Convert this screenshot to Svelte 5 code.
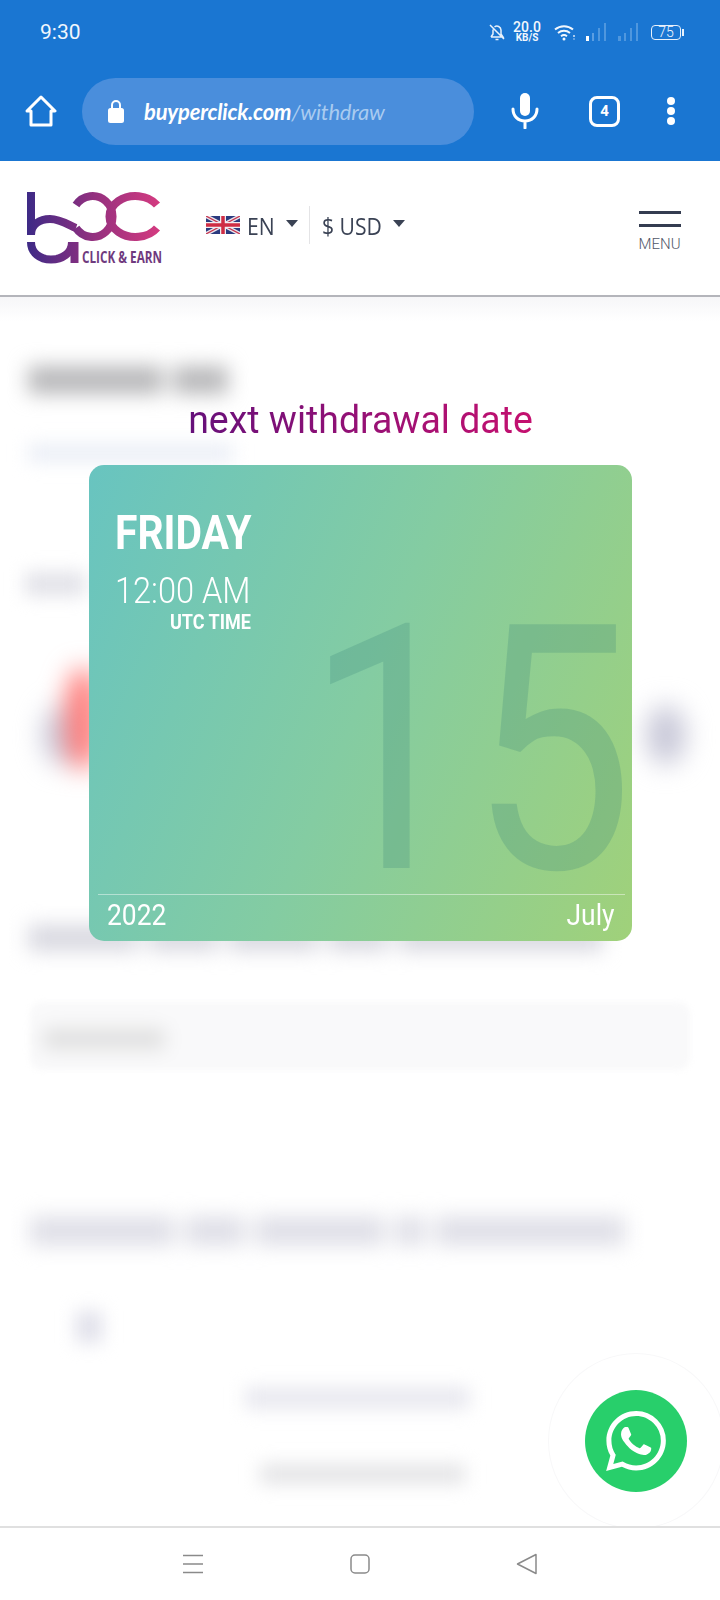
<script>
  const waPath = "M17.472 14.382c-.297-.149-1.758-.867-2.03-.967-.273-.099-.471-.148-.67.15-.197.297-.767.966-.94 1.164-.173.199-.347.223-.644.075-.297-.15-1.255-.463-2.39-1.475-.883-.788-1.48-1.761-1.653-2.059-.173-.297-.018-.458.13-.606.134-.133.298-.347.446-.52.149-.174.198-.298.298-.497.099-.198.05-.371-.025-.52-.075-.149-.669-1.612-.916-2.207-.242-.579-.487-.5-.669-.51-.173-.008-.371-.01-.57-.01-.198 0-.52.074-.792.372-.272.297-1.04 1.016-1.04 2.479 0 1.462 1.065 2.875 1.213 3.074.149.198 2.096 3.2 5.077 4.487.709.306 1.262.489 1.694.625.712.227 1.36.195 1.871.118.571-.085 1.758-.719 2.006-1.413.248-.694.248-1.289.173-1.413-.074-.124-.272-.198-.57-.347m-5.421 7.403h-.004a9.87 9.87 0 01-5.031-1.378l-.361-.214-3.741.982.998-3.648-.235-.374a9.86 9.86 0 01-1.51-5.26c.001-5.45 4.436-9.884 9.888-9.884 2.64 0 5.122 1.03 6.988 2.898a9.825 9.825 0 012.893 6.994c-.003 5.45-4.437 9.884-9.885 9.884m8.413-18.297A11.815 11.815 0 0012.05 0C5.495 0 .16 5.335.157 11.892c0 2.096.547 4.142 1.588 5.945L.057 24l6.305-1.654a11.882 11.882 0 005.683 1.448h.005c6.554 0 11.89-5.335 11.893-11.893a11.821 11.821 0 00-3.48-8.413z";
</script>

<div class="phone">
  <div class="chrome">
    <div class="status">
      <span class="clock">9:30</span>
      <div class="status-icons">
        <svg width="18" height="18" viewBox="0 0 18 18" fill="none" stroke="#e8f1fb" stroke-width="1.5">
          <path d="M3 14h12l-2-3V7a4 4 0 0 0-6.500-3M5 6.500V11l-2 3M2 2l14 14" />
          <path d="M7.500 16.500h3" />
        </svg>
        <div class="speed"><b>20.0</b><small>KB/S</small></div>
        <svg class="wifi" width="24" height="17" viewBox="0 0 24 17" fill="none" stroke="#f2f7fd" stroke-width="2">
          <path d="M1 5.500a14 14 0 0 1 18 0M4 9a9.500 9.500 0 0 1 12 0M7 12.200a5 5 0 0 1 6 0" />
          <circle cx="10" cy="15" r="1.500" fill="#f2f7fd" stroke="none" />
          <path d="M20 11v2M20 14.500v1" stroke="#d5e5f7" stroke-width="1.500" />
        </svg>
        <svg width="22" height="20" viewBox="0 0 22 20">
          <rect x="0" y="14" width="3" height="5" fill="#fff" />
          <rect x="6" y="11" width="2" height="8" fill="#5b9ee2" />
          <rect x="12" y="6" width="2" height="13" fill="#4f97de" />
          <rect x="18" y="1" width="2" height="18" fill="#4f97de" />
        </svg>
        <svg width="22" height="20" viewBox="0 0 22 20">
          <rect x="0" y="14" width="3" height="5" fill="#4f97de" />
          <rect x="6" y="11" width="2" height="8" fill="#4f97de" />
          <rect x="12" y="6" width="2" height="13" fill="#4f97de" />
          <rect x="18" y="1" width="2" height="18" fill="#4f97de" />
        </svg>
        <div class="battery"><span>75</span></div>
      </div>
    </div>

    <div class="toolbar">
      <svg class="home" width="32" height="32" viewBox="0 0 32 32" fill="none" stroke="#fff" stroke-width="3" stroke-linejoin="round">
        <path d="M2 16 16 2l14 14h-4v14H6V16z" />
      </svg>
      <div class="url">
        <svg width="18" height="24" viewBox="0 0 18 24">
          <path d="M5 10V6a4 4 0 0 1 8 0v4" fill="none" stroke="#fff" stroke-width="2" />
          <rect x="1" y="9" width="16" height="15" rx="2.500" fill="#fff" />
        </svg>
        <span class="url-text">buyperclick.com<em>/withdraw</em></span>
      </div>
      <svg class="mic" width="28" height="36" viewBox="0 0 28 36" fill="none" stroke="#fff" stroke-width="3" stroke-linecap="round">
        <rect x="9" y="0" width="10" height="23" rx="5" fill="#fff" stroke="none" />
        <path d="M2 16c0 7 5 12 12 12s12-5 12-12M14 28v7" />
      </svg>
      <div class="tabs">4</div>
      <div class="dots"><i></i><i></i><i></i></div>
    </div>
  </div>

  <header>
    <svg class="logo" width="140" height="80" viewBox="27 190 140 80" fill="none">
      <defs>
        <linearGradient id="logoGrad" gradientUnits="userSpaceOnUse" x1="27" y1="0" x2="162" y2="0">
          <stop offset="0" stop-color="#3d2a86" />
          <stop offset="0.5" stop-color="#94307f" />
          <stop offset="1" stop-color="#d63b80" />
        </linearGradient>
      </defs>
      <g stroke="url(#logoGrad)" stroke-width="8">
        <path d="M31 192v43" />
        <path d="M31 235c0-11 9-16 19-16 11 0 20 7 26 9" />
        <path d="M31 242c0 11 9 17.500 20 17.500s21-6 21-17.500" />
        <path d="M74.500 242v21" />
        <path d="M76 205A20 20.500 0 1 1 76 228" />
        <path d="M157 205A26 20.500 0 1 0 157 228" />
      </g>
      <text class="tagline" x="82" y="263" textLength="80" lengthAdjust="spacingAndGlyphs">CLICK &amp; EARN</text>
    </svg>

    <div class="pickers">
      <svg class="flag" width="34" height="18" viewBox="0 0 34 18">
        <rect width="34" height="18" fill="#2b3a7e" />
        <path d="M0 0l34 18M34 0 0 18" stroke="#e9e6ee" stroke-width="4" />
        <path d="M0 0l34 18M34 0 0 18" stroke="#c8364f" stroke-width="1.200" />
        <path d="M17 0v18M0 9h34" stroke="#f0edf2" stroke-width="6" />
        <path d="M17 0v18M0 9h34" stroke="#cf2c44" stroke-width="3.500" />
      </svg>
      <span class="pick en">EN</span>
      <i class="caret"></i>
      <div class="usd">
        <span class="pick cur">$ USD</span>
        <i class="caret"></i>
      </div>
    </div>

    <div class="menu">
      <i></i><i></i>
      <span>MENU</span>
    </div>
  </header>

  <main>
    <div class="blurred">
      <div class="words title"><i style="width: 135px"></i><i style="width: 55px"></i></div>
      <div class="bl sub"></div>
      <div class="bl label"></div>
      <div class="blobs">
        <div class="blob left"><div class="red"></div></div>
        <div class="blob right"></div>
      </div>
      <div class="words row">
        <i style="width: 110px"></i><i style="width: 70px"></i><i style="width: 90px"></i><i style="width: 60px"></i><i style="width: 205px"></i>
      </div>
      <div class="input"><div class="bl input-text"></div></div>
      <div class="words long">
        <i style="width: 145px"></i><i style="width: 60px"></i><i style="width: 130px"></i><i style="width: 30px"></i><i style="width: 190px"></i>
      </div>
      <div class="bl square"></div>
      <div class="bl mid-a"></div>
      <div class="bl mid-b"></div>
    </div>

    <div class="modal">
      <h2>next withdrawal date</h2>
      <div class="card">
        <div class="big">15</div>
        <div class="when">
          <div class="day">FRIDAY</div>
          <div class="time">12:00 AM</div>
          <div class="utc">UTC TIME</div>
        </div>
        <div class="foot">
          <span>2022</span>
          <span>July</span>
        </div>
      </div>
    </div>

    <div class="whatsapp">
      <svg width="60" height="60" viewBox="0 0 24 24" fill="#fff"><path d={waPath} /></svg>
    </div>
  </main>

  <nav>
    <svg width="22" height="20" viewBox="0 0 22 20" stroke="#8a8a8a" stroke-width="1.500"><path d="M1 1.500h20M1 10h20M1 18.500h20" /></svg>
    <svg width="22" height="22" viewBox="0 0 22 22" fill="none" stroke="#8a8a8a" stroke-width="1.500"><rect x="2" y="2" width="18" height="18" rx="4" /></svg>
    <svg width="22" height="22" viewBox="0 0 22 22" fill="none" stroke="#8a8a8a" stroke-width="1.500" stroke-linejoin="round"><path d="M20 1.500v19L1.500 11z" /></svg>
  </nav>
</div>

<style>
  :global(body) {
    margin: 0;
    background: #fff;
  }

  .phone {
    width: 720px;
    height: 1600px;
    display: flex;
    flex-direction: column;
    overflow: hidden;
    font-family: Roboto, sans-serif;
  }

  .chrome {
    height: 161px;
    flex: none;
    background: #1a76d2;
  }

  .status {
    height: 64px;
    display: flex;
    align-items: center;
    justify-content: space-between;
    padding: 0 40px;
    color: #f2f7fd;
  }

  .clock {
    font-size: 21px;
  }

  .status-icons {
    display: flex;
    align-items: center;
    margin-right: -1px;
  }

  .speed {
    display: flex;
    flex-direction: column;
    align-items: center;
    margin-left: 6px;
    width: 30px;
  }

  .speed b {
    font-size: 14px;
    line-height: 11px;
    font-weight: 500;
  }

  .speed small {
    font-size: 10px;
    line-height: 10px;
    font-weight: 700;
  }

  .wifi {
    margin: 0 8px 0 12px;
  }

  .status-icons svg + svg {
    margin-right: 10px;
  }

  .battery {
    position: relative;
    width: 28px;
    height: 13px;
    margin-left: 1px;
    border: 1.500px solid #e8f1fb;
    border-radius: 4px;
    display: flex;
    align-items: center;
    justify-content: center;
    font-size: 14px;
    font-weight: 300;
  }

  .battery::after {
    content: "";
    position: absolute;
    right: -4px;
    top: 3px;
    width: 2px;
    height: 7px;
    background: #e8f1fb;
  }

  .toolbar {
    height: 68px;
    margin-top: 13px;
    display: flex;
    align-items: center;
    padding-left: 25px;
  }

  .url {
    width: 392px;
    height: 67px;
    box-sizing: border-box;
    margin-left: 25px;
    padding-left: 25px;
    border-radius: 34px;
    background: #4a8edc;
    display: flex;
    align-items: center;
    gap: 19px;
  }

  .url-text {
    color: #fff;
    font-family: Lato, sans-serif;
    font-size: 22px;
    font-weight: 700;
    font-style: italic;
    letter-spacing: -0.2px;
  }

  .url-text em {
    color: #a9cbf0;
    font-weight: 400;
  }

  .mic {
    margin-left: 37px;
    flex: none;
  }

  .tabs {
    width: 25px;
    height: 25px;
    margin-left: 50px;
    border: 3px solid #fff;
    border-radius: 8px;
    display: flex;
    align-items: center;
    justify-content: center;
    color: #fff;
    font-size: 15px;
    font-weight: 700;
  }

  .dots {
    margin-left: 47px;
    display: flex;
    flex-direction: column;
    gap: 2px;
  }

  .dots i {
    width: 8px;
    height: 8px;
    border-radius: 50%;
    background: #fff;
  }

  header {
    height: 136px;
    flex: none;
    box-sizing: border-box;
    display: flex;
    border-bottom: 2px solid #b4b5bb;
    position: relative;
    background: #fff;
    z-index: 1;
  }

  .logo {
    margin: 29px 0 0 27px;
    flex: none;
  }

  .tagline {
    fill: #6f3a7e;
    font-family: "Open Sans", sans-serif;
    font-size: 16px;
    font-weight: 700;
    stroke: none;
  }

  .pickers {
    height: 38px;
    margin: 45px 0 0 39px;
    display: flex;
    align-items: center;
    color: #3a4254;
  }

  .flag {
    margin: 0 7px 0 0;
  }

  .pick {
    font-family: "Open Sans", sans-serif;
    font-size: 24px;
    display: inline-block;
    white-space: nowrap;
    transform-origin: left center;
    transform: scaleX(0.88);
  }

  .en {
    width: 29px;
  }

  .cur {
    width: 60px;
    margin-left: 1px;
  }

  .caret {
    width: 0;
    height: 0;
    border: 6.500px solid transparent;
    border-top: 7px solid #3a4254;
    border-bottom: 0;
    margin-left: 10px;
    margin-top: -4px;
  }

  .usd {
    margin-left: 11px;
    height: 38px;
    padding-left: 11px;
    border-left: 1px solid #e4e4e6;
    display: flex;
    align-items: center;
  }

  .usd .caret {
    margin-left: 11px;
  }

  .menu {
    position: absolute;
    right: 39px;
    top: 50px;
    width: 43px;
    display: flex;
    flex-direction: column;
    align-items: center;
  }

  .menu i {
    width: 42px;
    height: 3px;
    background: #343c50;
    margin-bottom: 10px;
  }

  .menu span {
    margin-top: -1px;
    color: #515868;
    font-size: 15px;
    line-height: 16px;
    font-weight: 300;
  }

  main {
    flex: 1;
    position: relative;
    overflow: hidden;
    background: linear-gradient(#f6f6f8, #fff 24px);
  }

  .blurred {
    display: flex;
    flex-direction: column;
    align-items: flex-start;
    height: 100%;
  }

  .bl {
    filter: blur(9px);
  }

  .words {
    display: flex;
    gap: 10px;
    filter: blur(10px);
  }

  .title {
    height: 28px;
    margin: 69px 0 0 28px;
  }

  .title i {
    background: #b8b8ba;
  }

  .sub {
    width: 205px;
    height: 18px;
    margin: 50px 0 0 28px;
    background: #eaeef6;
  }

  .label {
    width: 60px;
    height: 24px;
    margin: 110px 0 0 25px;
    background: #e2e2e8;
  }

  .blobs {
    width: 100%;
    height: 60px;
    margin-top: 109px;
    display: flex;
    justify-content: space-between;
  }

  .blob {
    position: relative;
    width: 40px;
    background: #c8c8d8;
    border-radius: 50%;
    filter: blur(13px);
  }

  .blob.left {
    margin-left: 42px;
  }

  .blob.right {
    margin-right: 34px;
  }

  .red {
    position: absolute;
    left: 24px;
    top: -36px;
    width: 34px;
    height: 100px;
    background: #ff7c7a;
    border-radius: 40%;
  }

  .row {
    height: 26px;
    margin: 160px 0 0 28px;
  }

  .row i {
    background: #d8d8e0;
  }

  .input {
    width: 660px;
    height: 68px;
    box-sizing: border-box;
    margin: 51px 0 0 30px;
    padding: 28px 0 0 14px;
    background: #f9f9fa;
    border-radius: 12px;
    filter: blur(3px);
  }

  .input-text {
    width: 120px;
    height: 18px;
    background: #dcdcdc;
  }

  .long {
    height: 30px;
    margin: 146px 0 0 30px;
  }

  .long i {
    background: #e0e0e8;
  }

  .square {
    width: 26px;
    height: 32px;
    margin: 65px 0 0 76px;
    background: #e0e0ea;
  }

  .mid-a {
    width: 225px;
    height: 22px;
    margin: 44px 0 0 245px;
    background: #e8e8ef;
  }

  .mid-b {
    width: 205px;
    height: 20px;
    margin: 55px 0 0 260px;
    background: #e4e4e6;
  }

  .modal {
    position: absolute;
    left: 89px;
    top: 100px;
    width: 543px;
  }

  h2 {
    width: max-content;
    margin: 0 auto;
    height: 68px;
    font-size: 39px;
    line-height: 46px;
    font-weight: 400;
    background: linear-gradient(90deg, #65107a, #c5106f);
    -webkit-background-clip: text;
    background-clip: text;
    color: transparent;
    transform: scaleX(0.96);
  }

  .card {
    position: relative;
    height: 476px;
    box-sizing: border-box;
    padding: 40px 0 0 26px;
    border-radius: 15px;
    background: linear-gradient(112deg, #68c4c0 0%, #84cca2 50%, #a0d17a 100%);
    color: #fff;
  }

  .big {
    position: absolute;
    right: -2px;
    top: 164px;
    font-size: 343px;
    line-height: 244px;
    font-weight: 400;
    color: rgba(56, 130, 120, 0.24);
    transform-origin: right center;
    transform: scaleX(0.85);
  }

  .when {
    position: relative;
    width: 136px;
    display: flex;
    flex-direction: column;
    align-items: flex-end;
  }

  .day {
    width: 100%;
    height: 56px;
    font-size: 48px;
    line-height: 56px;
    font-weight: 700;
    white-space: nowrap;
    transform-origin: left center;
    transform: scaleX(0.85);
  }

  .time {
    width: 100%;
    height: 44px;
    margin-top: 8px;
    font-size: 37px;
    line-height: 44px;
    font-weight: 300;
    white-space: nowrap;
    transform-origin: left center;
    transform: scaleX(0.88);
  }

  .utc {
    margin-top: -2px;
    font-size: 20px;
    line-height: 22px;
    font-weight: 700;
    white-space: nowrap;
    transform-origin: right center;
    transform: scaleX(0.9);
  }

  .foot {
    position: absolute;
    left: 9px;
    right: 7px;
    top: 429px;
    display: flex;
    justify-content: space-between;
    padding: 2px 10px 0 9px;
    border-top: 1px solid rgba(255, 255, 255, 0.45);
    font-size: 30px;
    line-height: 36px;
  }

  .foot span {
    transform: scaleX(0.88);
    transform-origin: left center;
  }

  .foot span:last-child {
    transform-origin: right center;
  }

  .whatsapp {
    position: absolute;
    left: 585px;
    top: 1093px;
    width: 102px;
    height: 102px;
    border-radius: 50%;
    background: #28cf6b;
    display: flex;
    align-items: center;
    justify-content: center;
    box-shadow: 0 0 0 36px #fff, 0 0 0 37px #f8f8f9;
  }

  nav {
    height: 74px;
    flex: none;
    position: relative;
    border-top: 2px solid #e0e0e0;
    background: #fff;
    display: flex;
    align-items: center;
    justify-content: center;
    gap: 145px;
    box-sizing: border-box;
  }
</style>
